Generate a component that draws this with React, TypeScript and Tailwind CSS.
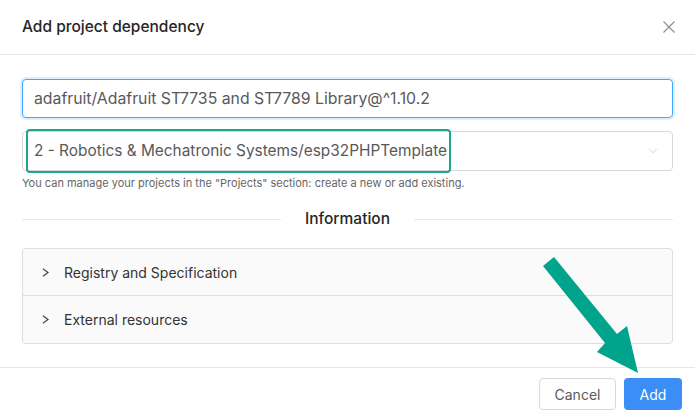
import { ChevronDown } from 'lucide-react'

const font = { fontFamily: 'Inter, "Noto Sans", sans-serif' }

function Caret() {
  return (
    <svg width="7" height="9" viewBox="0 0 7 9" className="mr-[15px] shrink-0">
      <polyline points="1,0.8 6,4.5 1,8.2" fill="none" stroke="#444" strokeWidth="1.2" />
    </svg>
  )
}

function PanelRow({ label, last }: { label: string; last?: boolean }) {
  return (
    <div
      className={`flex h-[47px] items-center pl-[19px] text-[14px] text-[#333] ${last ? '' : 'border-b border-[#dedede]'}`}
    >
      <Caret />
      {label}
    </div>
  )
}

// Annotation arrow pointing at the Add button
function Pointer() {
  return (
    <svg
      className="pointer-events-none absolute left-0 top-0"
      width="695"
      height="420"
      viewBox="0 0 695 420"
    >
      <polygon
        points="554,257 543,266 605,343 597,352 638,373 627,326 617,334"
        fill="#00a38b"
      />
    </svg>
  )
}

export default function App() {
  return (
    <div className="relative h-[420px] w-[695px] overflow-hidden bg-white" style={font}>
      <div className="flex h-[55px] items-center justify-between border-b border-[#e6e6e6] pl-[22px] pr-[20px]">
        <div className="text-[15.5px] font-medium text-[#262626]">Add project dependency</div>
        <svg width="12" height="12" viewBox="0 0 12 12">
          <path d="M0.5 0.5 L11.5 11.5 M11.5 0.5 L0.5 11.5" stroke="#8c8c8c" strokeWidth="1.1" />
        </svg>
      </div>

      <div className="px-[22px] pt-[24px]">
        <div className="flex h-[39px] items-center rounded-[4px] border border-[#40a9ff] pl-[11px] text-[15.8px] text-[#595959] shadow-[0_0_0_2px_rgba(24,144,255,0.15)]">
          adafruit/Adafruit ST7735 and ST7789 Library@^1.10.2
        </div>

        <div className="relative mt-[13px] flex h-[40px] items-center justify-between rounded-[4px] border border-[#d9d9d9] pl-[11px] pr-[12px] text-[15.4px] text-[#595959]">
          <span>2 - Robotics &amp; Mechatronic Systems/esp32PHPTemplate</span>
          <ChevronDown size={14} strokeWidth={1.2} className="text-[#c0c0c0]" />
          <div className="absolute left-[3px] top-[-3px] h-[44px] w-[425px] rounded-[4px] border-2 border-[#1ea58f]" />
        </div>

        <div className="mt-[5px] text-[11px] leading-[14px] text-[#666]">
          You can manage your projects in the "Projects" section: create a new or add existing.
        </div>

        <div className="mt-[17px] flex h-[24px] items-center">
          <div className="h-px flex-1 bg-[#e8e8e8]" />
          <div className="px-[24px] text-[15.5px] font-medium text-[#262626]">Information</div>
          <div className="h-px flex-1 bg-[#e8e8e8]" />
        </div>

        <div className="mt-[17px] overflow-hidden rounded-[4px] border border-[#dedede] bg-[#fafafa]">
          <PanelRow label="Registry and Specification" />
          <PanelRow label="External resources" last />
        </div>
      </div>

      <div className="absolute inset-x-0 top-[367px] flex h-[53px] items-start justify-end gap-[8px] border-t border-[#e6e6e6] pr-[13px] pt-[10px]">
        <button className="h-[32px] w-[77px] rounded-[4px] border border-[#d9d9d9] bg-white text-[14px] text-[#595959]">
          Cancel
        </button>
        <button className="h-[32px] w-[58px] rounded-[4px] bg-[#3a8ef6] text-[14px] text-white">
          Add
        </button>
      </div>

      <Pointer />
    </div>
  )
}
